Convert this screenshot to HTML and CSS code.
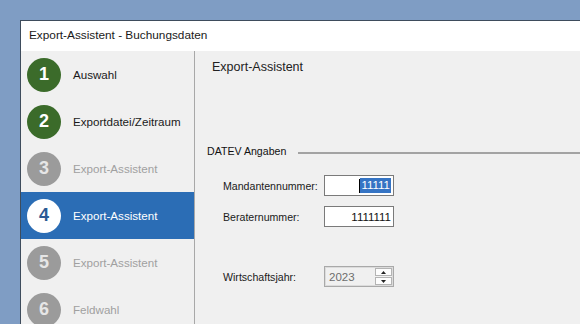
FILE: index.html
```html
<!DOCTYPE html>
<html lang="de">
<head>
<meta charset="UTF-8" />
<title>Export-Assistent - Buchungsdaten</title>
<link rel="stylesheet" href="styles.css">
</head>
<body>
  <div class="window">
    <div class="titlebar">Export-Assistent - Buchungsdaten</div>
    <div class="content">
      <!-- Wizard steps -->
      <div class="steps">
        <div class="step done"><span class="num">1</span><span class="label">Auswahl</span></div>
        <div class="step done"><span class="num">2</span><span class="label">Exportdatei/Zeitraum</span></div>
        <div class="step off"><span class="num">3</span><span class="label">Export-Assistent</span></div>
        <div class="step active"><span class="num">4</span><span class="label">Export-Assistent</span></div>
        <div class="step off"><span class="num">5</span><span class="label">Export-Assistent</span></div>
        <div class="step off"><span class="num">6</span><span class="label">Feldwahl</span></div>
      </div>

      <div class="panel">
        <div class="panel-title">Export-Assistent</div>

        <div class="group">
          <div class="group-head"><span>DATEV Angaben</span><span class="rule"></span></div>

          <div class="row">
            <label>Mandantennummer:</label>
            <div class="field"><span class="caret"></span><span class="sel">11111</span></div>
          </div>
          <div class="row">
            <label>Beraternummer:</label>
            <div class="field">1111111</div>
          </div>
          <div class="row row-year">
            <label>Wirtschaftsjahr:</label>
            <div class="spin">
              <span class="spin-value">2023</span>
              <span class="spin-btns">
                <span class="spin-btn"><svg viewBox="0 0 5 3"><path d="M0 3 L2.5 0 L5 3z"/></svg></span>
                <span class="spin-btn"><svg viewBox="0 0 5 3"><path d="M0 0 L5 0 L2.5 3z"/></svg></span>
              </span>
            </div>
          </div>
        </div>
      </div>
    </div>
  </div>
</body>
</html>
```

FILE: styles.css
```css
* {
  box-sizing: border-box;
}

body {
  margin: 0;
  height: 324px;
  overflow: hidden;
  background: #7f9dc4;
  font-family: "Liberation Sans", Arial, sans-serif;
}

.window {
  margin: 20px 0 0 20px;
  border-top: 1px solid #3e4c5c;
  border-left: 1px solid #3e4c5c;
  background: #f0f0f0;
  height: 304px;
  overflow: hidden;
}

.titlebar {
  height: 30px;
  line-height: 29px;
  background: #fff;
  padding-left: 8px;
  font-size: 11.8px;
  color: #1a1a1a;
}

.content {
  display: flex;
  height: 290px;
}

/* left side: wizard steps */
.steps {
  width: 174px;
  flex: none;
  border-right: 1px solid #a8a8a8;
  background: #f0f0f0;
  display: flex;
  flex-direction: column;
}

.step {
  height: 47px;
  flex: none;
  display: flex;
  align-items: center;
  padding-left: 6px;
  font-size: 11.6px;
}

.num {
  width: 34px;
  height: 34px;
  border-radius: 50%;
  display: flex;
  justify-content: center;
  align-items: center;
  font-weight: 700;
  font-size: 18px;
  color: #fff;
}

.label {
  margin-left: 12px;
}

.done .num { background: #3b6b2a; }
.done .label { color: #1a1a1a; }

.off .num { background: #9b9b9b; color: #e6e6e6; }
.off .label { color: #a0a0a0; }

.active { background: #2b6db5; }
.active .num { background: #fff; color: #2b5a94; }
.active .label { color: #fff; }

/* right side */
.panel {
  flex: 1;
  padding: 8px 0 0 12px;
}

.panel-title {
  margin-left: 5px;
  font-size: 12.5px;
  line-height: 16px;
  color: #222;
}

.group {
  margin-top: 69px;
}

.group-head {
  display: flex;
  align-items: center;
  font-size: 10.6px;
  line-height: 14px;
  color: #111;
}

.rule {
  flex: 1;
  margin-left: 12px;
  margin-top: 3px;
  border-top: 2px solid #a3a3a3;
}

.row {
  display: flex;
  align-items: center;
  padding-left: 16px;
  margin-top: 10px;
  font-size: 10.6px;
  color: #1a1a1a;
}

.group-head + .row { margin-top: 17px; }
.row-year { margin-top: 39px; }

.row label {
  width: 101px;
  flex: none;
  white-space: nowrap;
}

.field {
  width: 70px;
  height: 21px;
  flex: none;
  border: 1px solid #7a7a7a;
  background: #fff;
  display: flex;
  justify-content: flex-end;
  align-items: center;
  padding-right: 2px;
  font-size: 11.5px;
  color: #111;
}

.caret {
  width: 1px;
  height: 14px;
  background: #000;
}

.sel {
  background: #3574c4;
  color: #fff;
  line-height: 15px;
  padding: 0 1px;
}

.spin {
  width: 70px;
  height: 21px;
  flex: none;
  border: 1px solid #a9a9a9;
  background: #f0f0f0;
  display: flex;
  align-items: center;
  padding: 0 1px 0 4px;
  box-shadow: inset 0 0 0 1px #dcdcdc;
}

.spin-value {
  flex: 1;
  color: #6d6d6d;
  font-size: 11.5px;
}

.spin-btns {
  display: flex;
  flex-direction: column;
  gap: 1px;
}

.spin-btn {
  width: 17px;
  height: 8px;
  border: 1px solid #b4b4b4;
  background: #fdfdfd;
  display: flex;
  justify-content: center;
  align-items: center;
}

.spin-btn svg {
  width: 5px;
  height: 3px;
  fill: #222;
}
```
